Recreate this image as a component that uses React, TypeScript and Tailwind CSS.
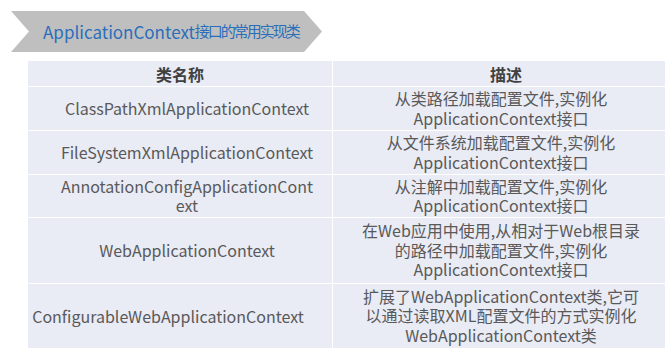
const rows: { name: string[]; desc: string[]; h: string; pad: string }[] = [
  { name: ['ClassPathXmlApplicationContext'], desc: ['从类路径加载配置文件,实例化', 'ApplicationContext接口'], h: 'h-[43px]', pad: 'pl-[14px]' },
  { name: ['FileSystemXmlApplicationContext'], desc: ['从文件系统加载配置文件,实例化', 'ApplicationContext接口'], h: 'h-[43px]', pad: 'pl-[14px]' },
  { name: ['AnnotationConfigApplicationCont', 'ext'], desc: ['从注解中加载配置文件,实例化', 'ApplicationContext接口'], h: 'h-[42px]', pad: 'pl-[14px]' },
  {
    name: ['WebApplicationContext'],
    desc: ['在Web应用中使用,从相对于Web根目录', '的路径中加载配置文件,实例化', 'ApplicationContext接口'],
    h: 'h-[65px]',
    pad: 'pl-[14px]',
  },
  {
    name: ['ConfigurableWebApplicationContext'],
    desc: ['扩展了WebApplicationContext类,它可', '以通过读取XML配置文件的方式实例化', 'WebApplicationContext类'],
    h: 'h-[64px]',
    pad: 'pr-[24px]',
  },
];

export default function App() {
  return (
    <div
      className="h-[353px] w-[672px] overflow-hidden bg-white"
      style={{ fontFamily: '"Noto Sans CJK SC", "Noto Sans", sans-serif' }}
    >
      <div className="pl-[11px] pt-[11px]">
        <div className="flex h-[41px] w-[311px] items-center whitespace-nowrap bg-[#bfbfbf] pl-[32px] text-[#2a6ebb] [clip-path:polygon(0_0,293px_0,100%_50%,293px_100%,0_100%,18px_50%)]">
          <span className="text-[17px]">ApplicationContext</span>
          <span className="text-[15px] tracking-[-2px]">接口的常用实现类</span>
        </div>
      </div>

      <div className="ml-[28px] mt-[9px] grid w-[637px] grid-cols-[304px_332px] gap-px">
        <div className="flex h-[25px] items-center justify-center bg-[#e9ebf5] text-[16px] font-bold text-[#404040]">
          类名称
        </div>
        <div className="flex h-[25px] items-center justify-center bg-[#e9ebf5] pl-[14px] text-[16px] font-bold text-[#404040]">
          描述
        </div>
        {rows.map((r) => (
          <>
            <div
              key={r.name[0]}
              className={`flex ${r.h} ${r.pad} flex-col items-center justify-center whitespace-nowrap bg-[#e9ebf5] text-[16px] leading-[19px] text-[#595959]`}
            >
              {r.name.map((l) => (
                <span key={l}>{l}</span>
              ))}
            </div>
            <div
              key={r.name[0] + '-d'}
              className={`flex ${r.h} flex-col items-center justify-center whitespace-nowrap bg-[#e9ebf5] pl-[4px] text-[16px] leading-[19.5px] text-[#595959]`}
            >
              {r.desc.map((l) => (
                <span key={l}>{l}</span>
              ))}
            </div>
          </>
        ))}
      </div>
    </div>
  );
}
